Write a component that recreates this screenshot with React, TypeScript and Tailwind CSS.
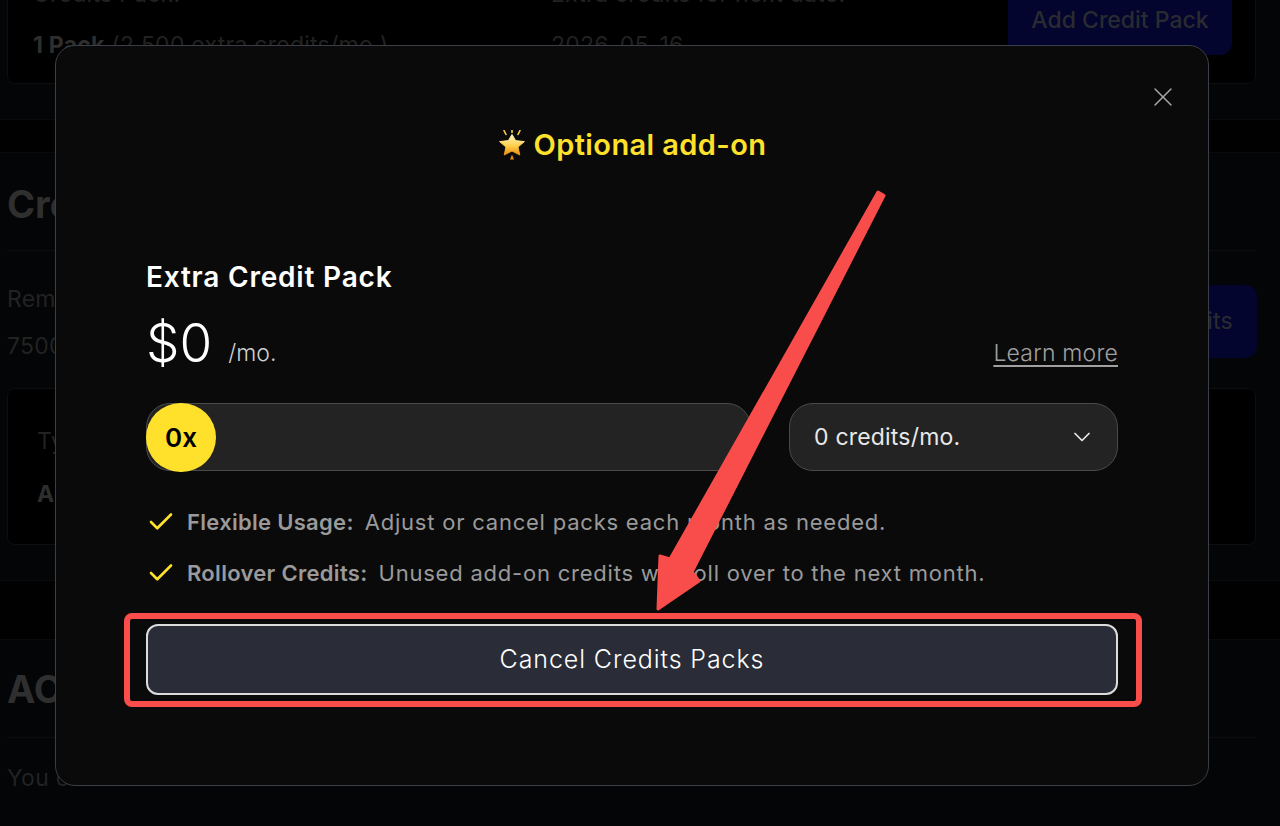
import React from "react";
import { X, ChevronDown, Check } from "lucide-react";

const font = { fontFamily: '"Inter", "Liberation Sans", sans-serif' };

function Star() {
  return (
    <svg width="28" height="30" viewBox="0 0 28 30" className="shrink-0">
      <defs>
        <linearGradient id="s" x1="0" y1="0" x2="0" y2="1">
          <stop offset="0" stopColor="#fff6c4" />
          <stop offset="0.55" stopColor="#ffd04a" />
          <stop offset="1" stopColor="#e88a10" />
        </linearGradient>
      </defs>
      <path d="M14 4.5 L17.6 10.6 L26.4 11.6 L20 17 L21.8 25 L14 21 L6.2 25 L8 17 L1.6 11.6 L10.4 10.6 Z" fill="url(#s)" stroke="url(#s)" strokeWidth="1" strokeLinejoin="round" />
      <path d="M6 0.5 L8 4.5 M22 0.5 L20 4.5 M14 0 L14 2.5" stroke="#ffd23f" strokeWidth="1.6" strokeLinecap="round" />
      <path d="M14 24.5 L16 29.5 L12 29.5 Z" fill="#e88a10" />
    </svg>
  );
}

function Background() {
  return (
    <div className="flex flex-col text-[#222222] text-[23px] tracking-[0.25px]">
      <div className="ml-[7px] mr-[24px] -mt-[26px] h-[110px] bg-black border border-[#0e0e10] rounded-lg flex pl-[25px] shrink-0">
        <div className="w-[518px] pt-[2px] flex flex-col gap-[16px]">
          <span>Credits Pack:</span>
          <span><b className="font-bold text-[#2e2e2e]">1 Pack</b> (2,500 extra credits/mo.)</span>
        </div>
        <div className="flex-1 pt-[2px] flex flex-col gap-[16px]">
          <span>Extra credits for next date:</span>
          <span>2026-05-16</span>
        </div>
        <div className="w-[224px] h-[80px] mr-[23px] bg-[#03052e] rounded-xl flex items-end justify-center pb-[18px] text-[#2a2b30] font-medium tracking-normal">
          Add Credit Pack
        </div>
      </div>
      <div className="h-[34px] mt-[35px] border-y border-[#0b0b0d] bg-[#010101] shrink-0" />
      <div className="h-[98px] ml-[7px] mr-[24px] pt-[6px] flex items-center border-b border-[#0d0d0f] text-[38px] font-bold tracking-normal text-[#2f2f2f] shrink-0">Credits</div>
      <div className="ml-[7px] mr-[23px] flex justify-between h-[137px] shrink-0">
        <div className="flex flex-col gap-[12px] pt-[31px]">
          <span>Remaining</span>
          <span>7500</span>
        </div>
        <div className="w-[200px] h-[73px] mt-[34px] bg-[#03052e] rounded-xl flex items-center justify-end pr-[24px] text-[#2a2b30]">Add Credits</div>
      </div>
      <div className="ml-[7px] mr-[24px] h-[157px] bg-black border border-[#0e0e10] rounded-lg px-[29px] pt-[35px] flex flex-col gap-[18px] shrink-0">
        <span>Type</span>
        <b className="font-bold text-[#2e2e2e]">Add-on</b>
      </div>
      <div className="h-[60px] mt-[35px] border-y border-[#0b0b0d] bg-[#010101] shrink-0" />
      <div className="h-[98px] ml-[7px] mr-[24px] pt-[2px] flex items-center border-b border-[#0d0d0f] text-[38px] font-bold tracking-normal text-[#2f2f2f] shrink-0">ACTIVITY</div>
      <div className="mx-[7px] pt-[23px]">You can view</div>
    </div>
  );
}

function Feature({ title, text }: { title: string; text: string }) {
  return (
    <div className="flex items-center h-[26px] text-[22px] text-[#9a9a9a]">
      <Check size={30} strokeWidth={2.1} className="text-[#ffe12b] mr-[11px] shrink-0" />
      <b className="font-semibold mr-[11px] tracking-[0.3px]">{title}</b>
      <span className="tracking-[0.78px]">{text}</span>
    </div>
  );
}

function Modal() {
  return (
    <div className="absolute left-[55px] top-[45px] w-[1154px] h-[741px] bg-[#0a0a0a] border border-[#3a3e46] rounded-[20px] px-[90px] flex flex-col text-white">
      <X size={32} strokeWidth={1.1} className="absolute top-[35px] right-[29px] text-[#a8a8a8]" />
      <div className="flex items-center justify-center gap-[8px] mt-[81px] h-[36px] text-[#ffe12b] text-[29px] font-semibold tracking-[0.4px]">
        <Star />
        <span>Optional add-on</span>
      </div>
      <div className="mt-[96px] h-[36px] flex items-center text-[28px] font-semibold tracking-[0.8px]">Extra Credit Pack</div>
      <div className="mt-[18px] h-[60px] flex items-end justify-between">
        <div className="flex items-end">
          <span className="text-[53px] leading-[60px] font-light">$0</span>
          <span className="ml-[16px] mb-[3px] text-[23px] text-[#d0d0d0] font-light">/mo.</span>
        </div>
        <a className="text-[23px] text-[#a0a0a0] font-light underline underline-offset-4 mb-[3px] tracking-[0.2px]">Learn more</a>
      </div>
      <div className="mt-[30px] flex gap-[38px] h-[68px]">
        <div className="flex-1 relative bg-[#232323] border border-[#4a4a4a] rounded-[24px] flex items-center">
          <div className="absolute -left-[1px] -top-[1px] w-[70px] h-[69px] rounded-full bg-[#ffe12b] text-black font-semibold text-[26px] flex items-center justify-center">0x</div>
        </div>
        <div className="w-[329px] bg-[#232323] border border-[#4a4a4a] rounded-[24px] flex items-center justify-between pl-[24px] pr-[21px] text-[23px] text-[#e8e8e8] tracking-[0.2px]">
          <span>0 credits/mo.</span>
          <ChevronDown size={28} strokeWidth={1.5} />
        </div>
      </div>
      <div className="mt-[38px] flex flex-col gap-[25px]">
        <Feature title="Flexible Usage:" text="Adjust or cancel packs each month as needed." />
        <Feature title="Rollover Credits:" text="Unused add-on credits will roll over to the next month." />
      </div>
      <div className="mt-[38px] h-[71px] bg-[#2a2d37] border-2 border-[#dcdcdc] rounded-xl flex items-center justify-center text-[25px] font-light tracking-[0.9px] text-white">
        Cancel Credits Packs
      </div>
    </div>
  );
}

function Annotation() {
  return (
    <>
      <div className="absolute left-[124px] top-[613px] w-[1018px] h-[94px] border-[6px] border-[#f94d4b] rounded-[8px]" />
      <svg className="absolute left-0 top-0 pointer-events-none" width="1280" height="826">
        <path
          d="M878 192 L884 195.5 L692 572 L699 581 L658 609 L660 556 L670 559 Z"
          fill="#f94d4b"
          stroke="#f94d4b"
          strokeWidth="3"
          strokeLinejoin="round"
        />
      </svg>
    </>
  );
}

export default function App() {
  return (
    <div className="relative w-[1280px] h-[826px] overflow-hidden bg-[#040506]" style={font}>
      <Background />
      <Modal />
      <Annotation />
    </div>
  );
}
